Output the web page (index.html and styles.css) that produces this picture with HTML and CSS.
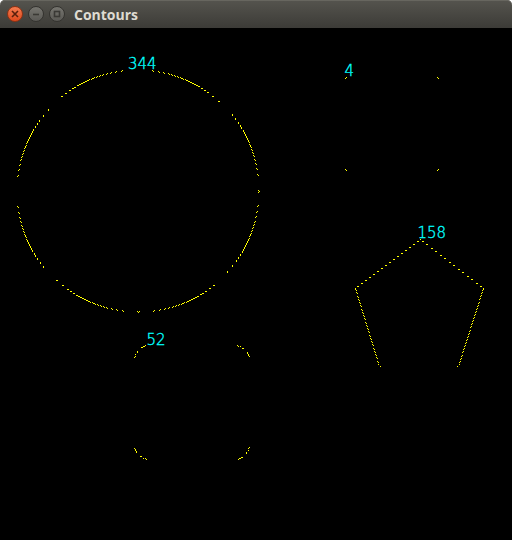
FILE: index.html
```html
<!DOCTYPE html>
<html lang="en">
<head>
  <meta charset="UTF-8">
  <title>Contours</title>
  <link rel="stylesheet" href="styles.css">
</head>
<body>

  <div class="window">
    <div class="titlebar">
      <div class="buttons">
        <span class="btn close">
          <svg width="8" height="8" viewBox="0 0 8 8"><path d="M1 1L7 7M7 1L1 7" /></svg>
        </span>
        <span class="btn">
          <svg width="8" height="8" viewBox="0 0 8 8"><path d="M1 4.5H7" /></svg>
        </span>
        <span class="btn">
          <svg width="8" height="8" viewBox="0 0 8 8"><rect x="1.5" y="1.5" width="5" height="5" /></svg>
        </span>
      </div>
      <span class="title">Contours</span>
    </div>
    <!-- coordinates are window coordinates, so the view starts under the 28px title bar -->
    <svg class="canvas" id="canvas" width="512" height="512" viewBox="0 28 512 512"></svg>
  </div>

  <script>
    const NS = 'http://www.w3.org/2000/svg';
    const canvas = document.getElementById('canvas');

    // bresenham, end point not included
    function line(a, b) {
      const pts = [];
      let x0 = a[0], y0 = a[1];
      const x1 = b[0], y1 = b[1];
      const dx = Math.abs(x1 - x0), dy = -Math.abs(y1 - y0);
      const sx = x0 < x1 ? 1 : -1, sy = y0 < y1 ? 1 : -1;
      let err = dx + dy;
      while (x0 !== x1 || y0 !== y1) {
        pts.push([x0, y0]);
        const e2 = 2 * err;
        if (e2 >= dy) { err += dy; x0 += sx; }
        if (e2 <= dx) { err += dx; y0 += sy; }
      }
      return pts;
    }

    function dropCorners(c) {
      const out = [];
      const n = c.length;
      for (let i = 0; i < n; i++) {
        const p = out.length ? out[out.length - 1] : c[n - 1];
        const q = c[(i + 1) % n];
        if (Math.abs(q[0] - p[0]) === 1 && Math.abs(q[1] - p[1]) === 1) continue;
        out.push(c[i]);
      }
      return out;
    }

    // keep only points where the chain changes direction
    function simplify(c) {
      const n = c.length;
      return c.filter((p, i) => {
        const a = c[(i - 1 + n) % n], b = c[(i + 1) % n];
        return (p[0] - a[0]) !== (b[0] - p[0]) || (p[1] - a[1]) !== (b[1] - p[1]);
      });
    }

    function contour(samples) {
      const pts = samples.map(p => [Math.round(p[0]), Math.round(p[1])]);
      let chain = [];
      for (let i = 0; i < pts.length; i++) {
        chain = chain.concat(line(pts[i], pts[(i + 1) % pts.length]));
      }
      return simplify(dropCorners(chain));
    }

    function arc(cx, cy, r, from, to, steps) {
      const pts = [];
      for (let i = 0; i <= steps; i++) {
        const t = (from + (to - from) * i / steps) * Math.PI / 180;
        pts.push([cx + r * Math.cos(t), cy + r * Math.sin(t)]);
      }
      return pts;
    }

    const r = 15;
    const shapes = [
      { label: '344', at: [128, 68.5], pts: arc(137.5, 190.5, 121, -90, 270, 3000) },
      { label: '4', at: [344.5, 75.5], pts: [[345, 77], [438, 77], [438, 170], [345, 170]] },
      { label: '158', at: [417.5, 238], pts: [[420, 239], [483, 288], [458, 366], [379, 366], [355, 288]] },
      { label: '52', at: [146.5, 344.5], pts: [].concat(
          arc(249 - r, 345 + r, r, -90, 0, 60),
          arc(249 - r, 459 - r, r, 0, 90, 60),
          arc(134 + r, 459 - r, r, 90, 180, 60),
          arc(134 + r, 345 + r, r, 180, 270, 60)) }
    ];

    shapes.forEach(shape => {
      contour(shape.pts).forEach(p => {
        const dot = document.createElementNS(NS, 'rect');
        dot.setAttribute('x', p[0]);
        dot.setAttribute('y', p[1]);
        dot.setAttribute('width', 1);
        dot.setAttribute('height', 1);
        dot.setAttribute('class', 'dot');
        canvas.appendChild(dot);
      });

      const text = document.createElementNS(NS, 'text');
      text.setAttribute('x', shape.at[0]);
      text.setAttribute('y', shape.at[1]);
      text.setAttribute('class', 'label');
      text.textContent = shape.label;
      canvas.appendChild(text);
    });
  </script>

</body>
</html>
```

FILE: styles.css
```css
body {
  margin: 0;
  background: #fff;
}

.window {
  width: 512px;
  display: flex;
  flex-direction: column;
}

.titlebar {
  height: 28px;
  display: flex;
  align-items: center;
  border-radius: 5px 5px 0 0;
  background: linear-gradient(#55544e, #3c3b37);
  box-shadow: inset 0 1px 0 #67665f;
}

.buttons {
  display: flex;
  gap: 5px;
  padding-left: 7px;
}

.btn {
  width: 14px;
  height: 14px;
  border-radius: 50%;
  border: 1px solid #34332f;
  background: linear-gradient(#76756f, #5a5955);
  display: flex;
  align-items: center;
  justify-content: center;
}

.btn svg path,
.btn svg rect {
  fill: none;
  stroke: #3a3935;
  stroke-width: 1.6;
}

.btn.close {
  border-color: #8f3214;
  background: linear-gradient(#f47b4f, #df4a1d);
}

.btn.close svg path {
  stroke: #5a200c;
}

.title {
  margin-left: 9px;
  font-family: "Open Sans", "DejaVu Sans", sans-serif;
  font-weight: bold;
  font-size: 14px;
  color: #dfdbd2;
}

.canvas {
  display: block;
  background: #000;
}

.dot {
  fill: #ffff00;
  shape-rendering: crispEdges;
}

.label {
  font-family: "DejaVu Sans", sans-serif;
  font-weight: 200;
  font-size: 15px;
  fill: #00ffff;
  stroke: #00ffff;
  stroke-width: 0.35;
}
```
